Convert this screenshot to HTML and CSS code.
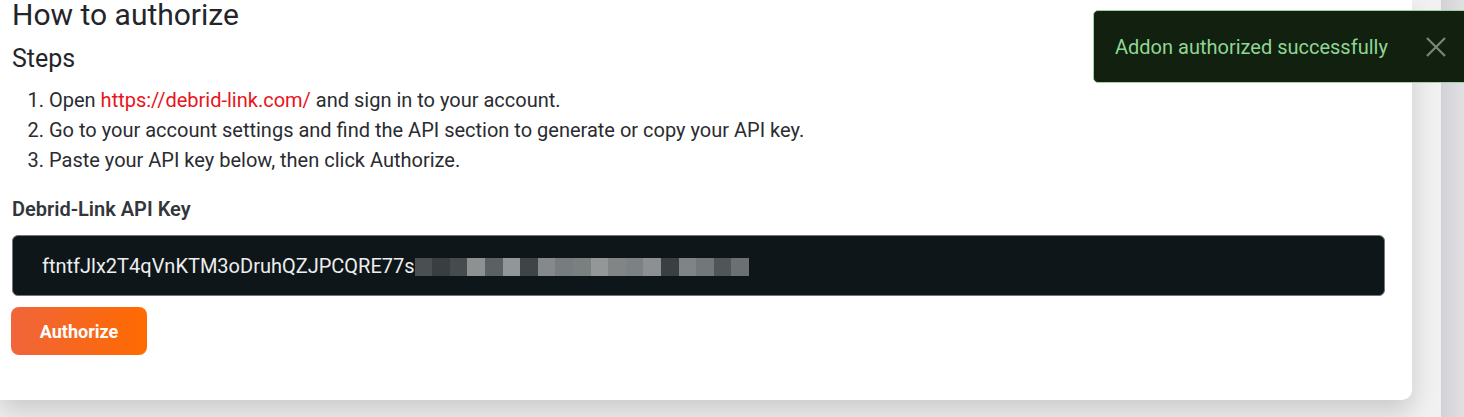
FILE: index.html
```html
<!DOCTYPE html>
<html>
<head>
<meta charset="utf-8">
<link rel="stylesheet" href="styles.css">
</head>
<body>
<div class="page">
  <main class="main">
    <section class="card">
      <h2 class="title">How to authorize</h2>
      <h3 class="subtitle">Steps</h3>
      <ol class="steps">
        <li>Open <a class="link" href="#">https://debrid-link.com/</a> and sign in to your account.</li>
        <li>Go to your account settings and find the API section to generate or copy your API key.</li>
        <li>Paste your API key below, then click Authorize.</li>
      </ol>
      <label class="label">Debrid-Link API Key</label>
      <div class="input">
        <span class="key">ftntfJlx2T4qVnKTM3oDruhQZJPCQRE77s</span>
        <span class="mask"><i></i><i></i><i></i><i></i><i></i><i></i><i></i><i></i><i></i><i></i><i></i><i></i><i></i><i></i><i></i><i></i><i></i><i></i><i></i></span>
      </div>
      <button class="btn">Authorize</button>
    </section>
  </main>
  <div class="strip"></div>
</div>
<div class="toast">
  <span class="toast-text">Addon authorized successfully</span>
  <svg class="close" width="22" height="22" viewBox="0 0 22 22"><path d="M2 2 L20 20 M20 2 L2 20" stroke="#7d857b" stroke-width="2.2" fill="none"/></svg>
</div>
</body>
</html>
```
FILE: styles.css
```css
* { box-sizing: border-box; }
html, body { margin: 0; padding: 0; }
body {
  font-family: Roboto, "Liberation Sans", sans-serif;
  width: 1464px;
  height: 417px;
  overflow: hidden;
  background: #f0f0f0;
}
.page {
  display: flex;
  height: 417px;
}
.main {
  width: 1441px;
  background: #f1f1f1;
}
.strip {
  width: 23px;
  background: linear-gradient(to right, #d2d2d6, #e1e1e4);
}
.card {
  width: 1412px;
  height: 400px;
  background: #fff;
  border-radius: 0 0 10px 0;
  box-shadow: 0 12px 26px rgba(0,0,0,0.16);
  padding: 0 27px 0 12px;
  color: #222;
}
.title {
  margin: 0;
  font-size: 30px;
  font-weight: 400;
  line-height: 30px;
  color: #23252a;
}
.subtitle {
  margin: 15px 0 0;
  font-size: 25px;
  font-weight: 400;
  line-height: 28px;
  color: #23252a;
}
.steps {
  margin: 12px 0 0;
  padding-left: 37px;
  font-size: 20px;
  line-height: 30px;
  color: #2a2c31;
}
.link {
  color: #e8141c;
  text-decoration: none;
}
.label {
  display: block;
  margin-top: 22px;
  font-size: 20px;
  font-weight: 600;
  line-height: 24px;
  color: #33363b;
}
.input {
  margin-top: 14px;
  height: 61px;
  background: #0f1619;
  border: 1px solid #70787a;
  border-radius: 6px;
  display: flex;
  align-items: center;
  padding-left: 29px;
  color: #eceeef;
  font-size: 20px;
}
.mask {
  display: flex;
  height: 18px;
  margin-top: 2px;
}
.mask i {
  display: block;
  width: 17.6px;
  height: 18px;
}
.mask i:nth-child(1) { background: #4a5052; }
.mask i:nth-child(2) { background: #393e40; }
.mask i:nth-child(3) { background: #464c4e; }
.mask i:nth-child(4) { background: #8e9192; }
.mask i:nth-child(5) { background: #5b6062; }
.mask i:nth-child(6) { background: #929697; }
.mask i:nth-child(7) { background: #3f4547; }
.mask i:nth-child(8) { background: #85898b; }
.mask i:nth-child(9) { background: #777c7e; }
.mask i:nth-child(10) { background: #7a7f80; }
.mask i:nth-child(11) { background: #939798; }
.mask i:nth-child(12) { background: #818586; }
.mask i:nth-child(13) { background: #7c8183; }
.mask i:nth-child(14) { background: #8c9092; }
.mask i:nth-child(15) { background: #3a3f42; }
.mask i:nth-child(16) { background: #7f8484; }
.mask i:nth-child(17) { background: #727779; }
.mask i:nth-child(18) { background: #505558; }
.mask i:nth-child(19) { background: #6c7072; }
.btn {
  display: block;
  margin: 11px 0 0 -1px;
  width: 136px;
  height: 48px;
  border: none;
  border-radius: 8px;
  background: linear-gradient(to right, #f0653a, #ff6a00);
  color: #fff;
  font-family: Roboto, "Liberation Sans", sans-serif;
  font-size: 18px;
  font-weight: 700;
  padding: 0;
}
.toast {
  position: fixed;
  top: 10px;
  left: 1093px;
  width: 400px;
  height: 73px;
  background: #11200f;
  border: 1.5px solid #9ed49f;
  border-radius: 5px;
  display: flex;
  align-items: center;
  padding-left: 21px;
}
.toast-text {
  color: #8fd694;
  font-size: 20px;
  width: 310px;
}
.close {
  display: block;
  margin-top: 1px;
}
```
